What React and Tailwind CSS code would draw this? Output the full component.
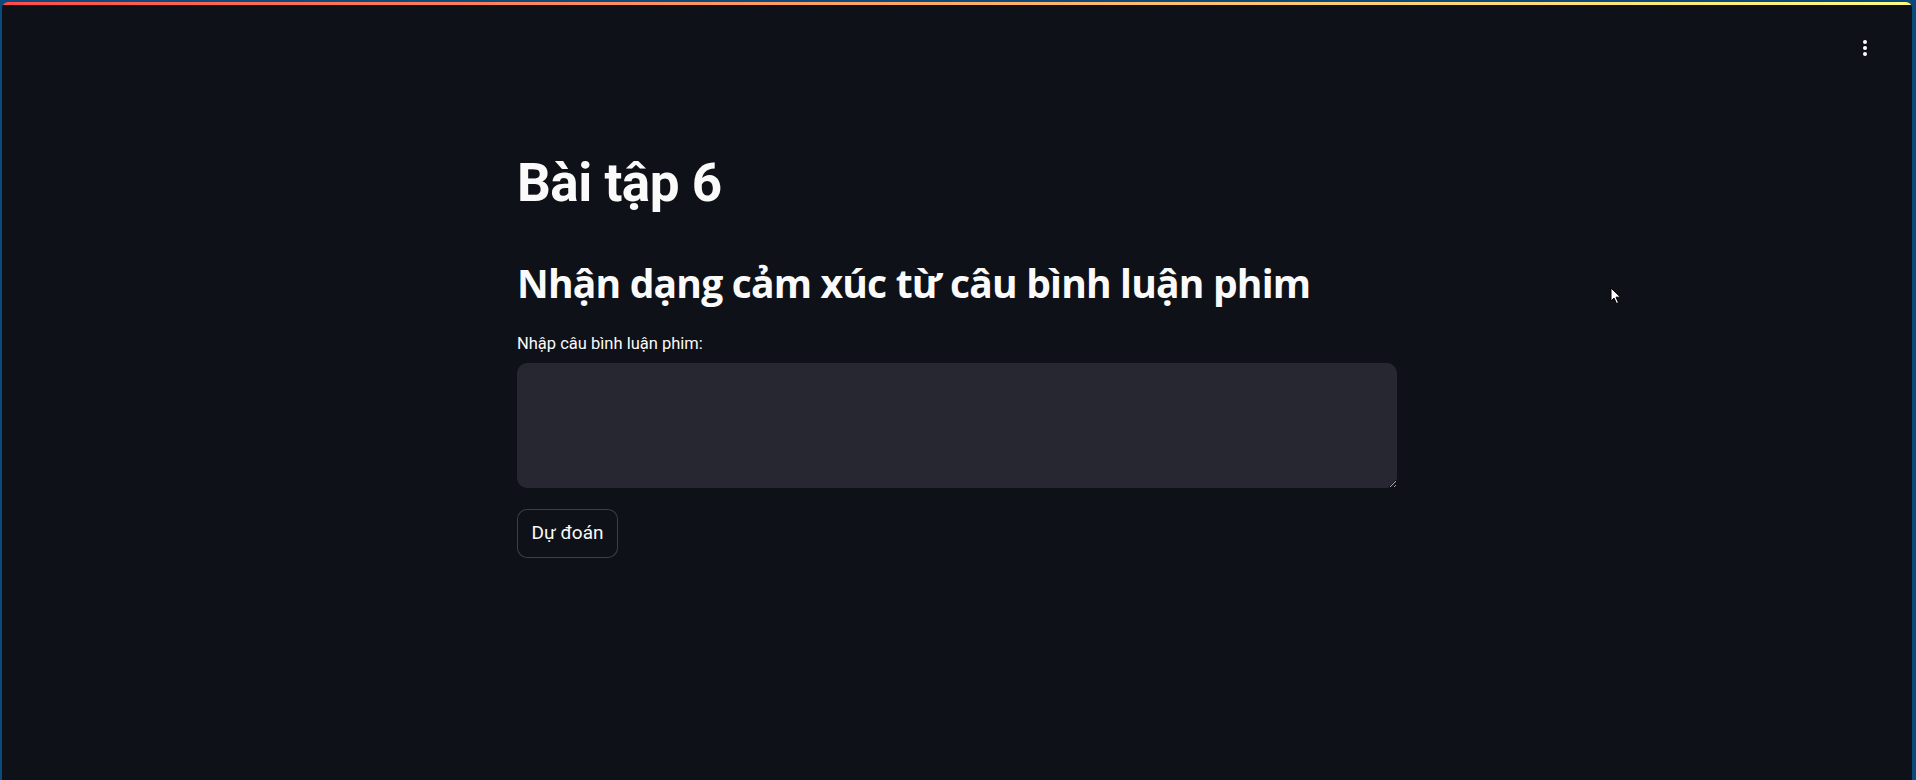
export default function App() {
  return (
    <div className="h-[780px] w-full bg-[#0b4a7d] pl-[2px] pr-[4px] pt-[2px] flex flex-col" style={{ fontFamily: 'Roboto, "Noto Sans", sans-serif' }}>
      <div className="relative flex-1 flex flex-col bg-[#0e1117] rounded-t-[6px] overflow-hidden">
        {/* decoration bar */}
        <div className="h-[3px] w-full bg-gradient-to-r from-[#ff4b4b] to-[#fffd80]" />

        {/* header */}
        <div className="flex justify-end pr-[43px] pt-[33px]">
          <button className="flex flex-col items-center gap-[2px] p-[2px]">
            <span className="w-[4px] h-[4px] rounded-full bg-white" />
            <span className="w-[4px] h-[4px] rounded-full bg-white" />
            <span className="w-[4px] h-[4px] rounded-full bg-white" />
          </button>
        </div>

        {/* main block */}
        <div className="w-[880px] mx-auto pt-[93px] text-[#fafafa]">
          <h1 className="text-[53px] leading-[64px] font-bold tracking-[-0.5px]">Bài tập 6</h1>
          <h2 className="mt-[44px] text-[39px] leading-[47px] font-bold tracking-[-0.8px]" style={{ fontFamily: '"Open Sans", Roboto, sans-serif' }}>
            Nhận dạng cảm xúc từ câu bình luận phim
          </h2>

          <label className="block mt-[25px] text-[16.5px] leading-[25px]">Nhập câu bình luận phim:</label>
          <textarea className="mt-[7px] block w-full h-[125px] rounded-[10px] bg-[#262730] resize-y outline-none px-4 py-3 text-[20px] text-[#fafafa]" />

          <button className="mt-[21px] h-[49px] w-[101px] rounded-[10px] border border-[rgba(250,250,250,0.2)] bg-[#0e1117] text-[19px] text-[#fafafa]">
            Dự đoán
          </button>
        </div>

        {/* mouse pointer */}
        <svg className="absolute left-[1608px] top-[285px]" width="12" height="18" viewBox="0 0 12 18">
          <path d="M1 1 L1 14 L4 11 L6.5 16.5 L8.5 15.6 L6 10.2 L10.5 10.2 Z" fill="#ffffff" stroke="#000000" strokeWidth="1" />
        </svg>
      </div>
    </div>
  )
}
